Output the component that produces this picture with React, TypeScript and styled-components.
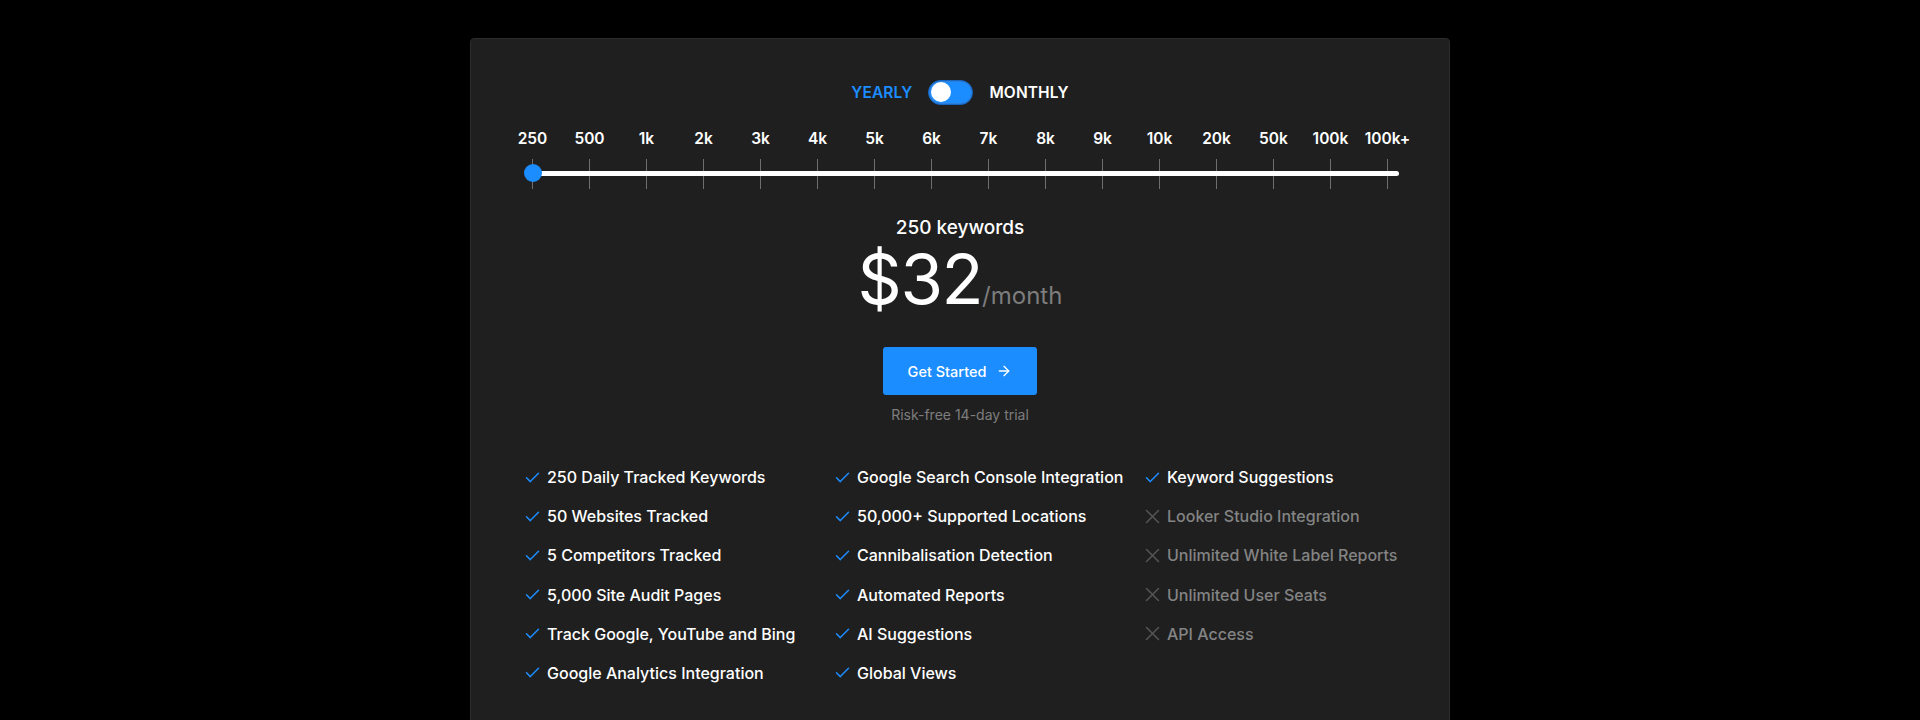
import React, { useState } from 'react';
import styled, { createGlobalStyle } from 'styled-components';
import { ArrowRight } from 'lucide-react';

const BLUE = '#1c8dff';

const GlobalStyle = createGlobalStyle`
    html, body {
        margin: 0;
        padding: 0;
        background: #000;
        font-family: Inter, "Open Sans", sans-serif;
        color: #fff;
    }
`;

const steps = ['250', '500', '1k', '2k', '3k', '4k', '5k', '6k', '7k', '8k', '9k', '10k', '20k', '50k', '100k', '100k+'];

type Feature = { label: string; included: boolean };

const columns: Feature[][] = [
    [
        { label: '250 Daily Tracked Keywords', included: true },
        { label: '50 Websites Tracked', included: true },
        { label: '5 Competitors Tracked', included: true },
        { label: '5,000 Site Audit Pages', included: true },
        { label: 'Track Google, YouTube and Bing', included: true },
        { label: 'Google Analytics Integration', included: true },
    ],
    [
        { label: 'Google Search Console Integration', included: true },
        { label: '50,000+ Supported Locations', included: true },
        { label: 'Cannibalisation Detection', included: true },
        { label: 'Automated Reports', included: true },
        { label: 'AI Suggestions', included: true },
        { label: 'Global Views', included: true },
    ],
    [
        { label: 'Keyword Suggestions', included: true },
        { label: 'Looker Studio Integration', included: false },
        { label: 'Unlimited White Label Reports', included: false },
        { label: 'Unlimited User Seats', included: false },
        { label: 'API Access', included: false },
    ],
];

const Card = styled.div`
    width: 980px;
    box-sizing: border-box;
    margin: 38px auto 0;
    min-height: 720px;
    background: #1f1f1f;
    border: 1px solid #2c2c2c;
    border-radius: 4px;
    padding: 40.5px 32px 40px;
    display: flex;
    flex-direction: column;
    align-items: center;
`;

const ToggleRow = styled.div`
    display: flex;
    align-items: center;
    gap: 16px;
    height: 25px;
`;

const PeriodLabel = styled.span<{ $active: boolean }>`
    font-size: 15.5px;
    font-weight: 600;
    letter-spacing: 0.1px;
    color: ${(p) => (p.$active ? BLUE : '#fff')};
    cursor: pointer;
`;

const Switch = styled.button<{ $on: boolean }>`
    position: relative;
    width: 45px;
    height: 25px;
    padding: 0;
    border-radius: 13px;
    border: 1px solid #1466c4;
    background: ${BLUE};
    box-shadow: inset 0 0 0 1px #2f7fd8;
    cursor: pointer;

    &::after {
        content: '';
        position: absolute;
        top: 1.5px;
        left: ${(p) => (p.$on ? '22px' : '2px')};
        width: 20px;
        height: 20px;
        border-radius: 50%;
        background: #fff;
    }
`;

const Slider = styled.div`
    width: 912px;
    margin-top: 24px;
    display: flex;
    flex-direction: column;
`;

const StepLabels = styled.div`
    display: grid;
    grid-template-columns: repeat(16, 1fr);
    height: 20px;
`;

const StepLabel = styled.span`
    text-align: center;
    font-size: 15.5px;
    font-weight: 600;
    line-height: 20px;
    color: #fff;
`;

const TrackArea = styled.div`
    position: relative;
    height: 30px;
    margin-top: 10px;
    display: grid;
    grid-template-columns: repeat(16, 1fr);
`;

const Tick = styled.span`
    justify-self: center;
    width: 1px;
    height: 30px;
    background: #6e6e6e;
`;

const Rail = styled.div`
    position: absolute;
    left: 28.5px;
    right: 17px;
    top: 12px;
    height: 5px;
    border-radius: 3px;
    background: #fff;
`;

const Thumb = styled.span`
    position: absolute;
    top: 5.5px;
    width: 18px;
    height: 18px;
    margin-left: -9px;
    border-radius: 50%;
    background: ${BLUE};
`;

const Keywords = styled.div`
    margin-top: 27px;
    font-size: 19px;
    font-weight: 500;
    line-height: 24px;
`;

const PriceRow = styled.div`
    margin-top: 4px;
    display: flex;
    align-items: baseline;
    line-height: 70px;
    height: 70px;
`;

const Amount = styled.span`
    font-size: 69px;
    font-weight: 400;
    letter-spacing: -1.5px;
`;

const Period = styled.span`
    font-size: 24px;
    font-weight: 400;
    color: #7d7d7d;
`;

const CtaButton = styled.button`
    margin-top: 33.5px;
    width: 154px;
    height: 48px;
    border: none;
    border-radius: 3px;
    background: ${BLUE};
    color: #fff;
    font-family: inherit;
    font-size: 14.5px;
    font-weight: 500;
    display: flex;
    align-items: center;
    justify-content: center;
    gap: 10px;
    cursor: pointer;
`;

const Trial = styled.div`
    margin-top: 10px;
    font-size: 14px;
    line-height: 20px;
    color: #7d7d7d;
`;

const Features = styled.div`
    align-self: stretch;
    margin: 40px 0 0 22px;
    display: grid;
    grid-template-columns: repeat(3, 310px);
`;

const FeatureColumn = styled.ul`
    list-style: none;
    margin: 0;
    padding: 0;
    display: flex;
    flex-direction: column;
    gap: 15.2px;
`;

const FeatureItem = styled.li<{ $included: boolean }>`
    display: flex;
    align-items: center;
    gap: 7px;
    height: 24px;
    font-size: 16px;
    font-weight: 500;
    white-space: nowrap;
    color: ${(p) => (p.$included ? '#fff' : '#848484')};
`;

const CheckIcon = () => (
    <svg width="15" height="15" viewBox="0 0 15 15" fill="none">
        <path d="M1.5 7.8 L5.3 11.6 L13.5 3.2" stroke={BLUE} strokeWidth="1.5" strokeLinecap="round" strokeLinejoin="round" />
    </svg>
);

const CrossIcon = () => (
    <svg width="15" height="15" viewBox="0 0 15 15" fill="none">
        <path d="M1.5 1.5 L13.5 13.5 M13.5 1.5 L1.5 13.5" stroke="#555" strokeWidth="1.5" strokeLinecap="round" />
    </svg>
);

export default function App() {
    const [monthly, setMonthly] = useState(false);
    const [step] = useState(0);
    const thumbLeft = 28.5 + step * 57;

    return (
        <>
            <GlobalStyle />
            <Card>
                <ToggleRow>
                    <PeriodLabel $active={!monthly}>YEARLY</PeriodLabel>
                    <Switch $on={monthly} onClick={() => setMonthly(!monthly)} aria-label="billing period" />
                    <PeriodLabel $active={monthly}>MONTHLY</PeriodLabel>
                </ToggleRow>

                <Slider>
                    <StepLabels>
                        {steps.map((s) => (
                            <StepLabel key={s}>{s}</StepLabel>
                        ))}
                    </StepLabels>
                    <TrackArea>
                        {steps.map((s) => (
                            <Tick key={s} />
                        ))}
                        <Rail />
                        <Thumb style={{ left: thumbLeft }} />
                    </TrackArea>
                </Slider>

                <Keywords>250 keywords</Keywords>
                <PriceRow>
                    <Amount>$32</Amount>
                    <Period>/month</Period>
                </PriceRow>

                <CtaButton>
                    Get Started
                    <ArrowRight size={16} strokeWidth={2} />
                </CtaButton>
                <Trial>Risk-free 14-day trial</Trial>

                <Features>
                    {columns.map((col, i) => (
                        <FeatureColumn key={i}>
                            {col.map((f) => (
                                <FeatureItem key={f.label} $included={f.included}>
                                    {f.included ? <CheckIcon /> : <CrossIcon />}
                                    {f.label}
                                </FeatureItem>
                            ))}
                        </FeatureColumn>
                    ))}
                </Features>
            </Card>
        </>
    );
}
